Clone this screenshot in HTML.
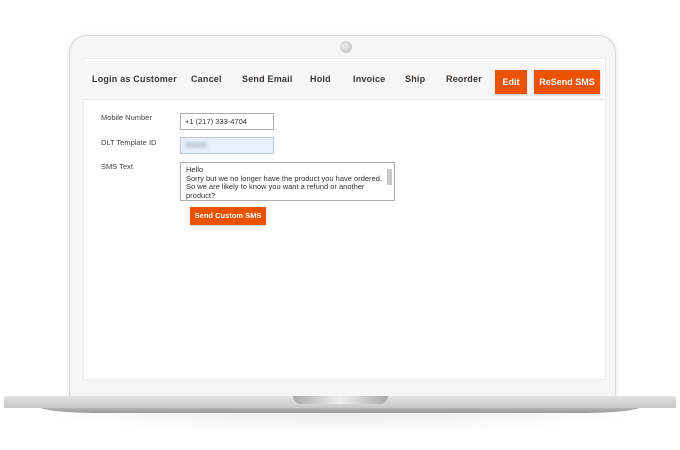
<!DOCTYPE html><html><head><style>
body{margin:0;width:680px;height:450px;background:#fff;position:relative;overflow:hidden;font-family:"Liberation Sans",sans-serif}
.lid{position:absolute;left:69px;top:35px;width:545px;height:370px;background:#f6f6f6;border:1.5px solid #d8d8d8;border-radius:18px 18px 0 0;box-shadow:0 0 6px rgba(0,0,0,.08)}
.cam{position:absolute;left:340px;top:41px;width:12px;height:12px;border-radius:50%;background:radial-gradient(circle at 40% 40%,#eee,#bbb)}
.scr{position:absolute;left:83px;top:58px;width:521px;height:320px;background:#fff;border:1px solid #ececec}
.bar{position:absolute;left:83px;top:61px;width:521px;height:38px;background:#f7f7f7;border-bottom:1px solid #e8e8e8}
.t{position:absolute;top:74px;font-size:9px;color:#3d3632;font-weight:bold;letter-spacing:.2px}
.btn{position:absolute;background:#eb5202;color:#fff;font-size:9px;font-weight:bold;text-align:center;box-shadow:0 1px 2px rgba(0,0,0,.2)}
.lb{position:absolute;left:101px;font-size:7.5px;color:#444}
.in{position:absolute;left:180px;border:1px solid #adadad;font-size:7.5px;color:#333;box-sizing:border-box;padding:3px 4px}
.base{position:absolute;left:4px;top:396px;width:672px;height:12px;background:linear-gradient(#e2e2e2,#c8c8c8);border-radius:1px}
.base2{position:absolute;left:40px;top:407px;width:600px;height:6px;background:linear-gradient(#bbb,#999);border-radius:0 0 60px 60px/0 0 6px 6px}
.notch{position:absolute;left:293px;top:396px;width:95px;height:8px;background:linear-gradient(90deg,#aaa,#eee,#aaa);border-radius:0 0 8px 8px}
.sh{position:absolute;left:40px;top:413px;width:600px;height:20px;background:radial-gradient(ellipse at top,rgba(0,0,0,.08),rgba(0,0,0,0) 70%)}
</style></head><body>
<div class="lid"></div><div class="cam"></div>
<div class="scr"></div><div class="bar"></div>
<div class="t" style="left:92px">Login as Customer</div>
<div class="t" style="left:191px">Cancel</div>
<div class="t" style="left:242px">Send Email</div>
<div class="t" style="left:310px">Hold</div>
<div class="t" style="left:353px">Invoice</div>
<div class="t" style="left:405px">Ship</div>
<div class="t" style="left:446px">Reorder</div>
<div class="btn" style="left:495px;top:70px;width:32px;height:24px;line-height:24px">Edit</div>
<div class="btn" style="left:534px;top:70px;width:66px;height:24px;line-height:24px">ReSend SMS</div>
<div class="lb" style="top:113px">Mobile Number</div>
<div class="lb" style="top:138px">DLT Template ID</div>
<div class="lb" style="top:162px">SMS Text</div>
<div class="in" style="top:113px;width:94px;height:17px">+1 (217) 333-4704</div>
<div class="in" style="top:137px;width:94px;height:17px;background:#e8f0fe;border-color:#b8c4d4"><span style="display:inline-block;width:22px;height:6px;background:#c5cfdc;filter:blur(1.5px)"></span></div>
<div class="in" style="top:162px;width:215px;height:39px;line-height:8.5px;padding:3px 12px 0 5px;overflow:hidden">Hello<br>Sorry but we no longer have the product you have ordered.<br>So we are likely to know you want a refund or another<br>product?<br>Let us know</div>
<div style="position:absolute;left:387px;top:169px;width:5px;height:16px;background:#c8c8c8"></div>
<div class="btn" style="left:190px;top:207px;width:76px;height:18px;line-height:18px;font-size:7.5px">Send Custom SMS</div>
<div class="sh"></div><div class="base2"></div><div class="base"></div><div class="notch"></div>
</body></html>
